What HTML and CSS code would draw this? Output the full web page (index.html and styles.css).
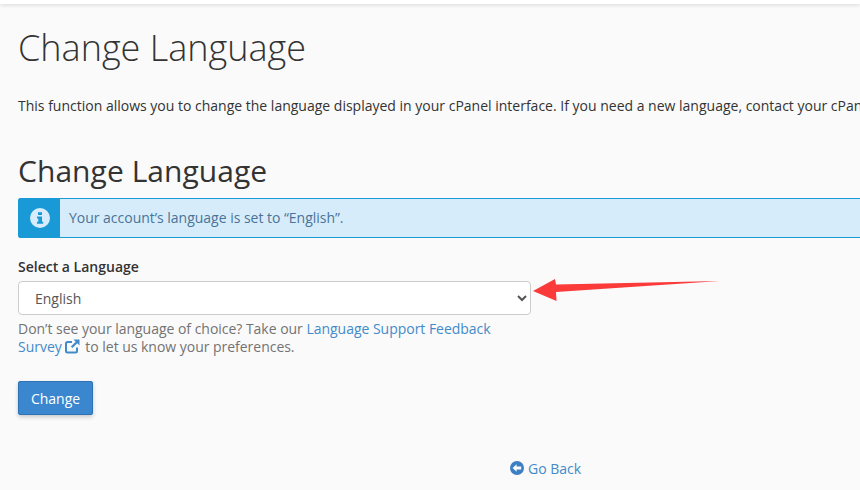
FILE: index.html
```html
<!DOCTYPE html>
<html lang="en">
<head>
<meta charset="utf-8">
<title>Change Language</title>
<link rel="stylesheet" href="styles.css">
</head>
<body>
<div class="topbar"></div>
<main class="page">
  <h1 class="title">Change Language</h1>
  <p class="intro">This function allows you to change the language displayed in your cPanel interface. If you need a new language, contact your cPanel &amp; WHM provider.</p>
  <h2 class="subtitle">Change Language</h2>
  <div class="alert">
    <div class="alert-icon">
      <svg width="20" height="20" viewBox="0 0 20 20"><circle cx="10" cy="10" r="10" fill="#d6ecfa"/><rect x="8" y="4.200" width="4" height="2.800" fill="#199ad6"/><path d="M7 8.400h5v5.400h1.200v2H7v-2h1.300v-3.400H7z" fill="#199ad6"/></svg>
    </div>
    <div class="alert-text">Your account’s language is set to “English”.</div>
  </div>
  <label class="label" for="lang">Select a Language</label>
  <select class="select" id="lang"><option>English</option></select>
  <p class="help">Don’t see your language of choice? Take our <a href="#">Language Support Feedback Survey<svg class="ext" width="15" height="15" viewBox="0 0 15 15"><path d="M12 8.500v3.500a1.500 1.500 0 0 1-1.500 1.500H2.500A1.500 1.500 0 0 1 1 12V4.500A1.500 1.500 0 0 1 2.500 3h4.500" fill="none" stroke="#428bca" stroke-width="2"/><path d="M8.500 0.500H14.500v6l-2.200-2.200-4.800 4.800-1.600-1.600 4.800-4.800z" fill="#428bca"/></svg></a> to let us know your preferences.</p>
  <button class="btn" type="button">Change</button>
  <div class="back"><a href="#"><svg width="14" height="14" viewBox="0 0 14 14"><circle cx="7" cy="7" r="7" fill="#3d7fc4"/><path d="M2.600 7l4-3.800v2.400h4.600v2.800H6.600v2.400z" fill="#fafafa"/></svg>Go Back</a></div>
</main>
<svg class="arrow" width="190" height="24" viewBox="0 0 190 24"><path d="M0 12L22 0l1 5.500L187 2 23 13l.5 9z" fill="#fb3a3a"/></svg>
</body>
</html>
```

FILE: styles.css
```css
html, body { margin: 0; height: 100%; overflow: hidden; }
body { background: #fafafa; font-family: "Open Sans", sans-serif; color: #333; width: 860px; height: 490px; position: relative; }
.topbar { height: 4px; background: #fff; box-shadow: 0 1px 4px rgba(0,0,0,.14); }
.page { padding: 0 0 0 18px; width: 900px; }
.title { margin: 19px 0 0; font-size: 36px; font-weight: 300; line-height: 49px; }
.intro { margin: 24px 0 0; font-size: 14px; line-height: 20px; white-space: nowrap; }
.subtitle { margin: 34px 0 0; font-size: 30px; font-weight: 400; letter-spacing: 0.05px; line-height: 41px; }
.alert { display: flex; margin-top: 7px; height: 40px; border: 1px solid #199ad6; box-sizing: border-box; background: #d6ecfa; border-radius: 2px 0 0 2px; }
.alert-icon { width: 41px; background: #199ad6; display: flex; align-items: center; justify-content: center; }
.alert-text { padding-left: 9px; font-size: 14px; letter-spacing: -0.02px; line-height: 38px; color: #4a7398; }
.label { display: block; margin-top: 19px; font-size: 14px; font-weight: 600; line-height: 20px; }
.select { display: block; margin-top: 4px; width: 513px; height: 34px; padding: 0 12px; font: 14px "Open Sans", sans-serif; color: #555; background: #fff; border: 1px solid #ccc; border-radius: 4px; }
.help { margin: 5px 0 0; width: 513px; font-size: 14px; letter-spacing: -0.025px; line-height: 18.250px; color: #737373; }
a { color: #428bca; text-decoration: none; }
.ext { margin-left: 3px; margin-right: 2px; vertical-align: -2px; }
.btn { display: block; margin-top: 24.500px; width: 75px; height: 34px; padding: 0; font: 14px "Open Sans", sans-serif; color: #fff; background: #3a87cf; border: 1px solid #2d72b5; border-radius: 2px; box-shadow: 0 2px 4px rgba(0,0,0,.2); }
.back { margin-top: 44px; padding-left: 492px; font-size: 14px; line-height: 20px; }
.back svg { margin-right: 4px; vertical-align: -1px; }
.arrow { position: absolute; left: 533px; top: 279px; }
```
